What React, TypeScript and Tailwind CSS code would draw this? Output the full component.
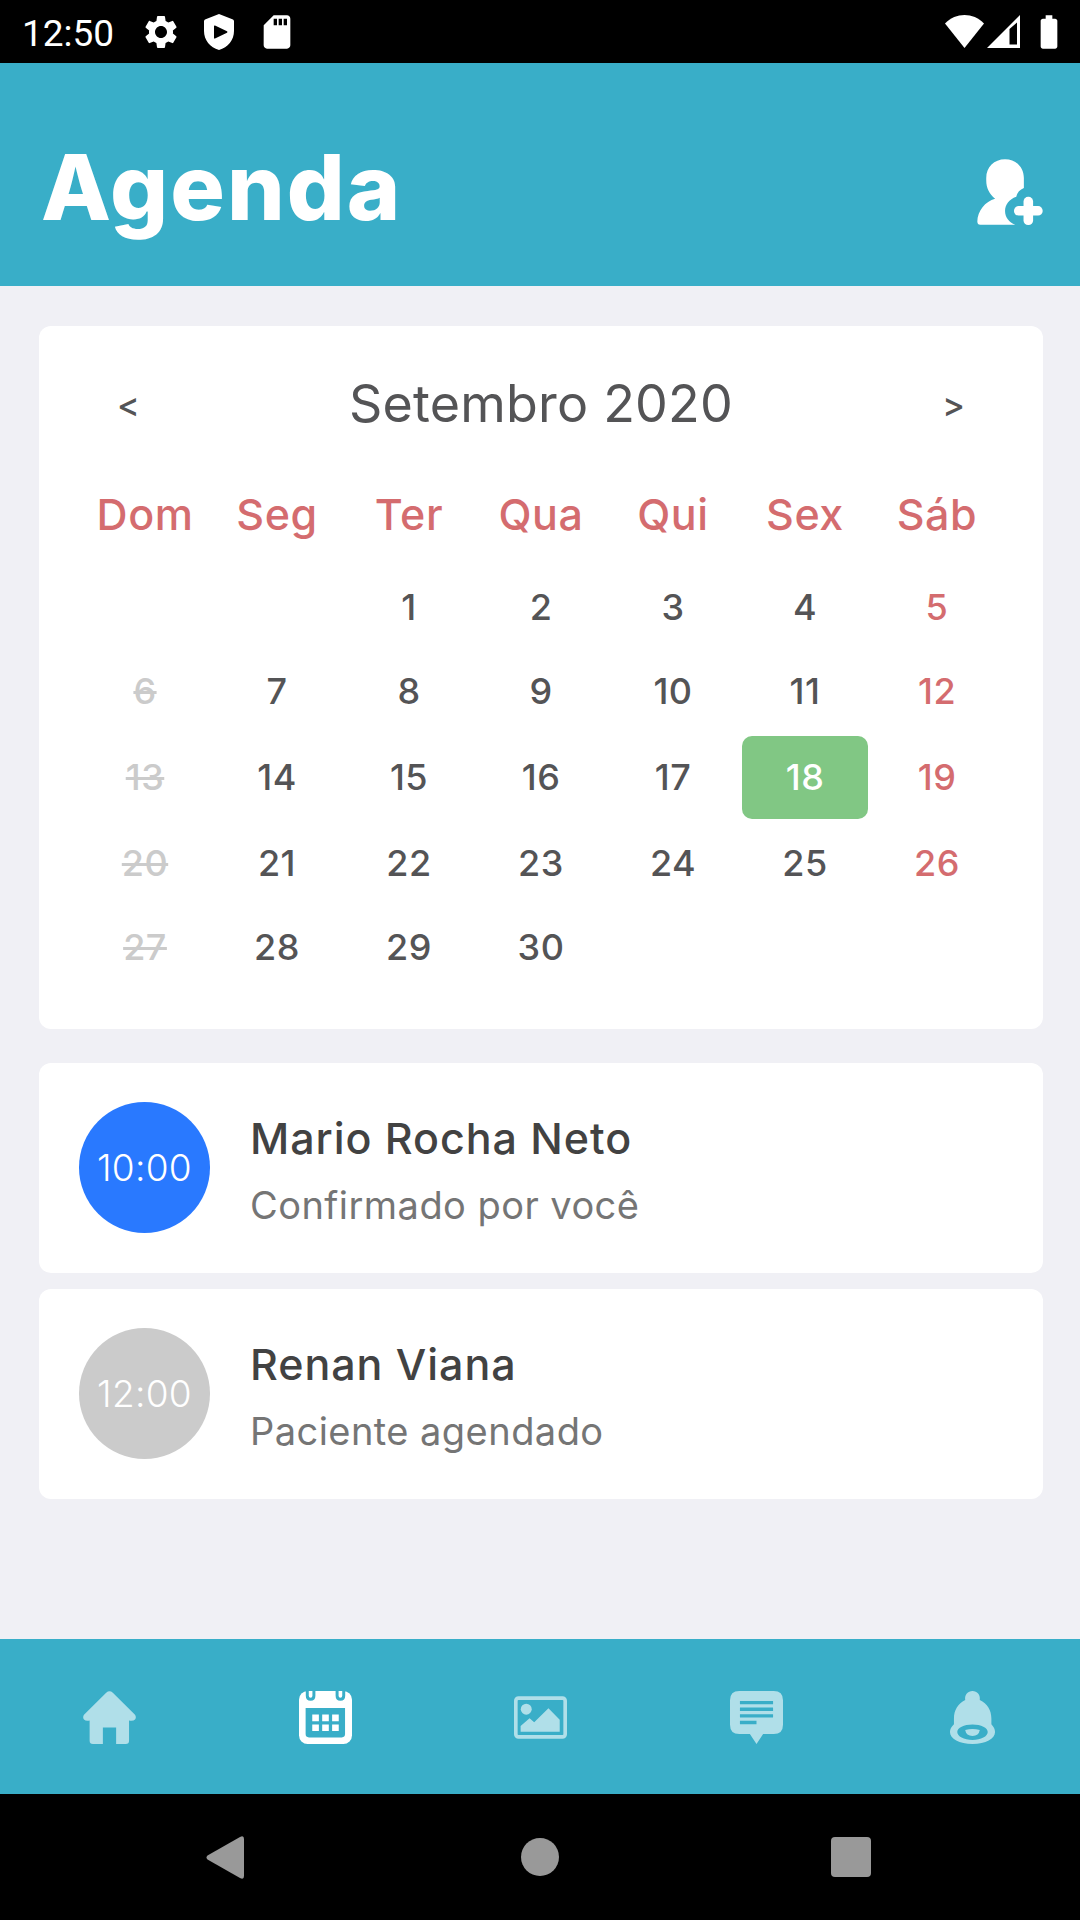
import React from 'react';
import { MdSettings, MdSdCard, MdBatteryFull } from 'react-icons/md';

interface Appointment {
  time: string;
  name: string;
  status: string;
  confirmed: boolean;
}

const WEEKDAYS = ['Dom', 'Seg', 'Ter', 'Qua', 'Qui', 'Sex', 'Sáb'];
const FIRST_WEEKDAY = 2;
const DAYS_IN_MONTH = 30;
const SELECTED_DAY = 18;

const appointments: Appointment[] = [
  { time: '10:00', name: 'Mario Rocha Neto', status: 'Confirmado por você', confirmed: true },
  { time: '12:00', name: 'Renan Viana', status: 'Paciente agendado', confirmed: false },
];

const StatusBar: React.FC = () => (
  <div className="flex h-[63px] shrink-0 items-center justify-between bg-black pl-[22px] pr-[11px] text-white">
    <div className="flex items-center">
      <span className="w-[119px] pt-[4px] font-['Roboto',sans-serif] text-[37px] leading-none">12:50</span>
      <MdSettings size={40} />
      <svg className="ml-[23px]" width="30" height="36" viewBox="0 0 30 36" fill="currentColor">
        <path
          fillRule="evenodd"
          d="M15 0 29 5.5Q30 6 30 7.5V17C30 26 24 33.5 15 36 6 33.5 0 26 0 17V7.500Q0 6 1 5.500ZM11 11.500Q10 11 10 12.500V23.500Q10 25 11 24.500L23 18.700Q24 18 23 17.300Z"
        />
      </svg>
      <MdSdCard className="ml-[23px]" size={40} />
    </div>
    <div className="flex items-center">
      <svg width="39" height="33" viewBox="0 0 39 33" fill="currentColor">
        <path d="M0 8.500C11-2.800 28-2.800 39 8.500L19.500 33Z" />
      </svg>
      <svg className="ml-[3px]" width="33" height="33" viewBox="0 0 33 33" fill="currentColor">
        <path fillRule="evenodd" d="M33 0V33H0ZM22.500 14V29.500H30V7.500Z" />
      </svg>
      <MdBatteryFull className="ml-[9px]" size={40} />
    </div>
  </div>
);

const AddPatientIcon: React.FC = () => (
  <svg width="66" height="66" viewBox="110 85.500 200 200" fill="#fff">
    <path d="M195 86C228 86 252 110 252 143V173C240 178 232 186 229 200C207 208 195 225 195 243C195 262 207 277 226 285H120C114 285 111 281 111 275C111 245 135 213 165 206C148 192 138 175 138 150V143C138 110 162 86 195 86Z" />
    <rect x="222" y="228" width="87" height="29" rx="14" />
    <rect x="251" y="200" width="29" height="85.500" rx="14" />
  </svg>
);

const Header: React.FC = () => (
  <header className="flex h-[223px] shrink-0 items-center justify-between bg-[#39aec8] pl-[41px] pr-[37px]">
    <h1 className="pt-[25px] text-[91px] font-extrabold leading-none tracking-[2px] text-white">Agenda</h1>
    <button className="pt-[35px]" aria-label="Adicionar paciente">
      <AddPatientIcon />
    </button>
  </header>
);

const dayClass = (day: number): string => {
  const weekday = (FIRST_WEEKDAY + day - 1) % 7;
  if (day === SELECTED_DAY) return 'bg-[#81c784] text-white';
  if (weekday === 0) return 'text-[#cbcbcb] line-through';
  if (weekday === 6) return 'text-[#d46c6f]';
  return 'text-[#545456]';
};

const Calendar: React.FC = () => {
  const days = Array.from({ length: DAYS_IN_MONTH }, (_, i) => i + 1);

  return (
    <section className="h-[703px] rounded-[12px] bg-white px-[40px] pt-[47px]">
      <div className="flex h-[62px] items-center justify-between px-[38px] text-[#545456]">
        <button className="pt-0.5 text-[34px] font-medium leading-none">&lt;</button>
        <h2 className="text-[52px] leading-none tracking-[0.2px]">Setembro 2020</h2>
        <button className="pt-0.5 text-[34px] font-medium leading-none">&gt;</button>
      </div>
      <div className="mt-[43px] grid grid-cols-7 text-center text-[43px] font-medium leading-[72px] tracking-[0.6px] text-[#d46c6f]">
        {WEEKDAYS.map((name) => (
          <span key={name}>{name}</span>
        ))}
      </div>
      <div className="mt-[16px] grid grid-cols-7 grid-rows-[82px_84px_84px_82px_83px] gap-y-[2px] text-center text-[36px] font-medium tracking-[0.5px]">
        {days.map((day) => (
          <div key={day} className={day === 1 ? 'col-start-3 px-[3px]' : 'px-[3px]'}>
            <div className={`h-[83px] rounded-[10px] leading-[83px] ${dayClass(day)}`}>{day}</div>
          </div>
        ))}
      </div>
    </section>
  );
};

const AppointmentCard: React.FC<{ appointment: Appointment }> = ({ appointment }) => (
  <article className="flex h-[210px] items-start rounded-[12px] bg-white pl-[40px] pt-[39px]">
    <div
      className={`flex size-[131px] items-center justify-center rounded-full text-[37px] font-light tracking-[0.3px] text-white ${
        appointment.confirmed ? 'bg-[#2979ff]' : 'bg-[#cbcbcb]'
      }`}
    >
      {appointment.time}
    </div>
    <div className="pl-[40px] pt-[3px]">
      <h3 className="text-[43px] font-medium leading-[66px] tracking-[0.95px] text-[#424242]">{appointment.name}</h3>
      <p className="text-[38px] leading-[68px] tracking-[0.45px] text-[#757575]">{appointment.status}</p>
    </div>
  </article>
);

const HomeIcon = () => (
  <svg width="53" height="53" viewBox="0 0 160 160" fill="currentColor">
    <path d="M70 5Q80-4 90 5L157 72Q162 79 157 86Q152 91 139 89V150Q139 160 129 160H100V110H60V160H30Q20 160 20 150V89Q8 91 3 86Q-2 79 3 72Z" />
  </svg>
);

const CalendarIcon = () => (
  <svg width="53" height="53" viewBox="0 0 160 160" fill="none">
    <rect width="160" height="160" rx="26" fill="currentColor" />
    <path d="M20 51H139V130Q139 140 129 140H30Q20 140 20 130Z" fill="#39aec8" />
    <path d="M40 71h20v20H40zM70 71h20v20H70zM100 71h20v20H100zM40 101h20v20H40zM70 101h20v20H70zM100 101h20v20H100z" fill="currentColor" />
    <path d="M25-4V14Q25 25 35 25T45 14V-4M115-4V14Q115 25 125 25T135 14V-4" stroke="#39aec8" strokeWidth="9" />
  </svg>
);

const PictureIcon = () => (
  <svg width="53" height="53" viewBox="0 0 160 160" fill="currentColor">
    <rect x="5.500" y="21.500" width="149" height="117" rx="8" fill="none" stroke="currentColor" strokeWidth="11" />
    <circle cx="37" cy="55" r="16.500" />
    <path d="M20 106L47 82L61 94L104 52L138 87V123H20Z" />
  </svg>
);

const ChatIcon = () => (
  <svg width="53" height="53" viewBox="0 0 160 160" fill="currentColor">
    <path
      fillRule="evenodd"
      d="M28 0H132Q160 0 160 28V102Q160 130 132 130H100L80 160L60 130H28Q0 130 0 102V28Q0 0 28 0ZM30 30V40H130V30ZM30 50V60H130V50ZM30 70V80H130V70ZM30 90V100H80V90Z"
    />
  </svg>
);

const BellIcon = () => (
  <svg width="53" height="53" viewBox="0 0 160 160" fill="currentColor">
    <path
      fillRule="evenodd"
      d="M80 0C94 0 104 11 102 27C125 39 137 57 137 83V100C144 108 148 115 148 124C148 145 120 160 80 160S12 145 12 124C12 115 16 108 24 100V83C24 57 36 39 58 27C56 11 66 0 80 0ZM80 101C54 101 34 111 34 124S54 148 80 148S126 137 126 124S106 101 80 101Z"
    />
    <path d="M58 118Q80 111 102 118Q99 136 80 136T58 118Z" />
  </svg>
);

const TABS = [
  { id: 'home', Icon: HomeIcon },
  { id: 'calendar', Icon: CalendarIcon },
  { id: 'pictures', Icon: PictureIcon },
  { id: 'chat', Icon: ChatIcon },
  { id: 'alerts', Icon: BellIcon },
];

const TabBar: React.FC = () => (
  <nav className="grid h-[155px] shrink-0 grid-cols-5 bg-[#39aec8] pl-[2px]">
    {TABS.map(({ id, Icon }) => (
      <button
        key={id}
        aria-label={id}
        className={`flex items-center justify-center pt-[2px] ${id === 'calendar' ? 'text-white' : 'text-[#b0dfe9]'}`}
      >
        <Icon />
      </button>
    ))}
  </nav>
);

const SystemNav: React.FC = () => (
  <div className="flex h-[126px] shrink-0 items-center bg-black pl-[206px]">
    <svg width="38" height="43" viewBox="0 0 38 43" fill="#999">
      <path d="M1.500 19.500L34 1Q38-1 38 3V40Q38 44 34 42L1.500 23.500Q-.5 21.500 1.500 19.500Z" />
    </svg>
    <div className="ml-[277px] size-[38px] rounded-full bg-[#999]" />
    <div className="ml-[272px] size-[40px] rounded-[4px] bg-[#999]" />
  </div>
);

export default function App() {
  return (
    <div className="flex h-[1920px] w-[1080px] flex-col overflow-hidden bg-[#f0f0f5] font-['Inter',sans-serif]">
      <StatusBar />
      <Header />
      <main className="flex-1 pl-[39px] pr-[37px] pt-[40px]">
        <Calendar />
        <div className="mt-[34px] flex flex-col gap-[16px]">
          {appointments.map((appointment) => (
            <AppointmentCard key={appointment.time} appointment={appointment} />
          ))}
        </div>
      </main>
      <TabBar />
      <SystemNav />
    </div>
  );
}
